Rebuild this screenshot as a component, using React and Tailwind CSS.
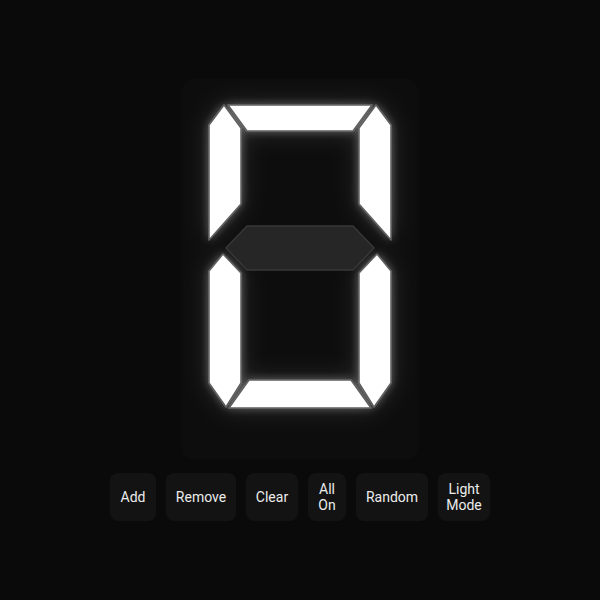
import React, { useState } from 'react';

// segment outlines in page coordinates (viewBox starts at the panel corner)
const SEGMENTS = {
  a: '228,104 372,104 353,130 247,130',
  b: '376,104 391,124 391,239 359,203 359,127',
  c: '377,253 391,270 391,382 374,406 359,382 359,272',
  d: '249,379 351,379 371,407 229,407',
  e: '223,253 241,272 241,382 226,406 209,382 209,270',
  f: '224,104 241,127 241,203 209,239 209,124',
  g: '226,247 247,225 353,225 374,247 353,269 247,269',
};

const BUTTONS = [
  { lines: ['Add'], w: 'w-[46px]' },
  { lines: ['Remove'], w: 'w-[70px]' },
  { lines: ['Clear'], w: 'w-[52px]' },
  { lines: ['All', 'On'], w: 'w-[38px]' },
  { lines: ['Random'], w: 'w-[72px]' },
  { lines: ['Light', 'Mode'], w: 'w-[52px]' },
];

export default function App() {
  const [on] = useState({ a: true, b: true, c: true, d: true, e: true, f: true, g: false });
  const lit = Object.keys(SEGMENTS).filter(k => on[k]);
  const dark = Object.keys(SEGMENTS).filter(k => !on[k]);

  return (
    <div
      className="min-h-screen bg-[#0a0a0a] flex flex-col items-center justify-center gap-[14px]"
      style={{ fontFamily: 'Roboto, "Noto Sans", sans-serif' }}
    >
      <div className="w-[236px] h-[380px] rounded-xl bg-[#0d0d0d] overflow-hidden">
        <svg width="236" height="380" viewBox="182 78 236 380">
          <defs>
            <filter id="glow" x="-40%" y="-40%" width="180%" height="180%">
              <feGaussianBlur in="SourceAlpha" stdDeviation="12" result="b1" />
              <feFlood floodColor="#ffffff" floodOpacity="0.14" />
              <feComposite in2="b1" operator="in" result="g1" />
              <feGaussianBlur in="SourceAlpha" stdDeviation="4" result="b2" />
              <feFlood floodColor="#ffffff" floodOpacity="0.3" />
              <feComposite in2="b2" operator="in" result="g2" />
              <feMerge>
                <feMergeNode in="g1" />
                <feMergeNode in="g2" />
                <feMergeNode in="SourceGraphic" />
              </feMerge>
            </filter>
          </defs>
          <g filter="url(#glow)">
            {lit.map(k => (
              <polygon key={k} points={SEGMENTS[k]} fill="#ffffff" stroke="#5f5f5f" strokeWidth="1.5" strokeLinejoin="round" />
            ))}
          </g>
          {dark.map(k => (
            <polygon key={k} points={SEGMENTS[k]} fill="#262626" stroke="#383838" strokeWidth="1.5" strokeLinejoin="round" />
          ))}
        </svg>
      </div>

      <div className="flex gap-[10px]">
        {BUTTONS.map(b => (
          <button
            key={b.lines.join(' ')}
            className={`${b.w} h-12 rounded-lg bg-[#131313] text-[#ececec] text-sm leading-4 flex flex-col items-center justify-center text-center`}
          >
            {b.lines.map(l => (
              <span key={l}>{l}</span>
            ))}
          </button>
        ))}
      </div>
    </div>
  );
}
